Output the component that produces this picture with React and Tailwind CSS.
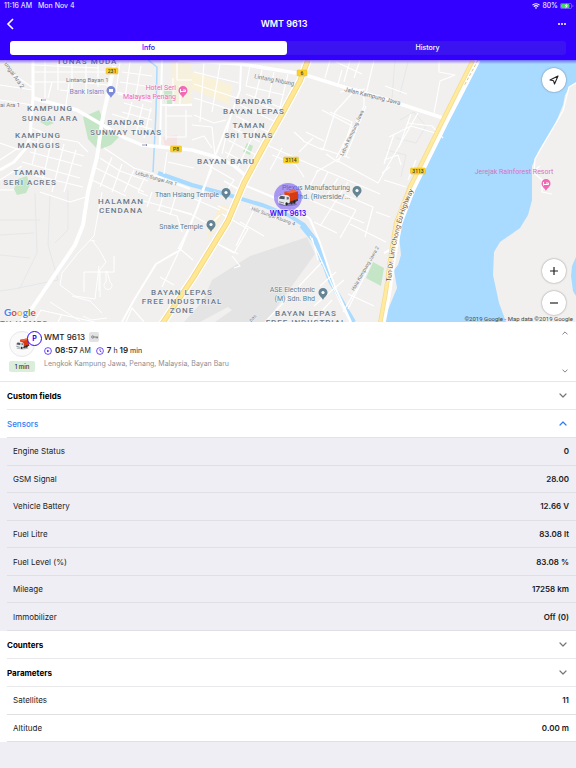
import { useState } from "react";

const SENSORS = [
    { label: "Engine Status", value: "0" },
    { label: "GSM Signal", value: "28.00" },
    { label: "Vehicle Battery", value: "12.66 V" },
    { label: "Fuel Litre", value: "83.08 lt" },
    { label: "Fuel Level (%)", value: "83.08 %" },
    { label: "Mileage", value: "17258 km" },
    { label: "Immobilizer", value: "Off (0)" },
];

const PARAMETERS = [
    { label: "Satellites", value: "11" },
    { label: "Altitude", value: "0.00 m" },
];

// district names, one entry per line of text
const AREAS = [
    ["TUNAS MUDA", 87, 64],
    ["KAMPUNG", 50, 111],
    ["SUNGAI ARA", 50, 121],
    ["BANDAR", 126, 125],
    ["SUNWAY TUNAS", 126, 135],
    ["KAMPUNG", 38, 138],
    ["MANGGIS", 39, 148],
    ["TAMAN", 30, 175],
    ["SERI ACRES", 30, 185],
    ["BANDAR", 254, 104],
    ["BAYAN LEPAS", 254, 114],
    ["TAMAN", 249, 128],
    ["SRI TUNAS", 249, 138],
    ["BAYAN BARU", 226, 164],
    ["HALAMAN", 121, 204],
    ["CENDANA", 121, 213],
    ["BAYAN LEPAS", 182, 295],
    ["FREE INDUSTRIAL", 182, 304],
    ["ZONE", 182, 313],
    ["BAYAN LEPAS", 306, 316],
    ["FREE INDUSTRIAL", 306, 325],
    ["TH HOMES", 24, 326],
];

const SHIELDS = [
    ["231", 112, 71, 12],
    ["P8", 176, 149, 11],
    ["6", 302, 73, 10],
    ["3114", 291, 160, 15],
    ["3113", 418, 171, 15],
];

function Pin({ x, y, color, children }) {
    return (
        <g transform={`translate(${x} ${y})`}>
            <path d="M0 7C-1 4-4.500 3-4.500-.5a4.500 4.500 0 0 1 9 0C4.500 3 1 4 0 7z" fill={color} />
            {children || <circle cy="-.5" r="1.600" fill="#fff" />}
        </g>
    );
}

function Truck(props) {
    return (
        <svg viewBox="0 0 24 20" aria-hidden="true" {...props}>
            <ellipse cx="12" cy="17" rx="10" ry="2" fill="#000" opacity=".25" />
            <path d="M8 3 19 1l4 2v10l-9 3-6-4z" fill="#e2411c" />
            <path d="M8 3 19 1l4 2-9 2z" fill="#f4683c" />
            <path d="M14 5l9-2v10l-9 3z" fill="#d63a12" />
            <path d="M11 15l12-4v2l-11 4z" fill="#3b3b3b" />
            <path d="M1 9 5 6l7 1 2 2v6l-5 3-8-3z" fill="#e6e9eb" />
            <path d="m2 10 2-2.500 4.500.9L8 11.500 2.500 10.800z" fill="#4a5660" />
            <path d="m10.500 8.500 2.500.8v2l-2.500.7z" fill="#6a757e" />
            <path d="m2 13.500 5.500 1.500v1.200L2 14.700z" fill="#7c8489" />
            <ellipse cx="10.500" cy="16.500" rx="1.400" ry="1.800" fill="#222" />
            <ellipse cx="19" cy="14.500" rx="1.400" ry="1.800" fill="#222" />
            <ellipse cx="16" cy="15.500" rx="1.200" ry="1.600" fill="#333" />
        </svg>
    );
}

function Chevron({ up, className }) {
    return (
        <svg viewBox="0 0 8 5" className={className} fill="none" stroke="currentColor" strokeWidth="1.200" strokeLinecap="round" strokeLinejoin="round" aria-hidden="true">
            <path d={up ? "M1 4l3-3 3 3" : "M1 1l3 3 3-3"} />
        </svg>
    );
}

function MapDrawing() {
    return (
        <svg
            viewBox="0 60 576 262"
            preserveAspectRatio="xMidYMid slice"
            className="block h-full w-full font-['Roboto',sans-serif]"
            fill="none"
            role="img"
            aria-label="Map of Bayan Lepas"
        >
            <path d="M0 60h576v262H0z" fill="#f1f0ef" />

            {/* built-up blocks */}
            <path d="M172 60h20v46h-14l-7-13z" fill="#f6f1df" />
            <path d="M192 72l40 13-3 20-37-16z" fill="#f9f1d8" />
            <path d="M209 225l12-20 8 2-22 34z" fill="#f8efd6" />
            <path d="M163 137l14-2v11l-12 2z" fill="#f3e3e3" />
            <path d="M307 237l-57 19-38 24-9 21-19 21h82l49-68z" fill="#e4e4e4" />
            <path d="M200 322l28-15 4 3-17 12z" fill="#f1f0ef" />

            {/* parks */}
            <g fill="#c4e6c6">
                <path d="M83 117l16-7 6 14-7 26-10-11z" />
                <path d="M101 127l18 10-8 8-10 4-3-10z" />
                <path d="M44 118l10 5-7 3-7-4z" />
                <path d="M18 179l9-3 3 9-4 8-9 2-3-6z" />
                <path d="M164 91h9v15l-8-1z" />
                <path d="M247 143l6 3-3 9-7-3z" />
                <path d="M373 262l11 6-3 18-15-8z" />
            </g>

            {/* sea and canals */}
            <path d="M478 60l-31 58-35 74-8 22-5 21 2 20-3 10-4 5 3 18-7 17-7 17h123l-7-19-6-28 1-23 6-10 20-14 8-13 4-15v-34l6-14 18-30 7-17 2-10 5-9 6-4V60z" fill="#a9daff" />
            <path d="M576 257l-4 9-1 10 2 15 3 5z" fill="#a9daff" />
            <path d="M148 60l9 7-1 45-3 60" stroke="#a9daff" strokeWidth="1.500" />
            <path d="M158 173l34 12 33 9 37 11 28 11 14 9 12 17 14 39 24 41" stroke="#a9daff" strokeWidth="4" />
            <path d="M302 225l14 17 8 22" stroke="#a9daff" strokeWidth="6" />

            {/* faint lanes */}
            <g stroke="#e6e7e8" strokeWidth="1">
                <path d="M35 193l2 60-17 35-20 3M50 195l-2 50 10 35-40 8M68 190v40l-13 13M0 220h40M0 235l34-2M0 255l30 3" />
                <path d="M395 60l-3 38M408 62l-8 32M400 120l14-8 12 14-10 17-20-5M386 150l20 5-5 22" />
            </g>

            {/* side streets */}
            <g stroke="#fff" strokeWidth="1.200" strokeLinejoin="round">
                <path d="M0 85l33 5M0 100l33 5M5 60l8 14 20 14M33 72h76M33 82h45l30 3M45 60v38M58 60v30M72 60v28M86 60v32M98 65v22M60 90l42 5M48 98l4-16M66 105l3-22M33 65l66 3" />
                <path d="M120 62l-4 30 34 7M122 72l30 4M120 82l31 5M118 94l34 8M130 62l-5 36M141 66l-6 34M124 103l28 8M122 112l30 8M119 121l33 8M132 102l-7 26M143 104l-7 29M151 108l-7 30M112 114l16 5" />
                <path d="M104 148l30 20 20 6M100 158l20 13 28 10M96 168l48 24M112 157l-12 30M122 164l-10 28M134 170l-10 22M146 175l-8 17M92 180l34 16" />
                <path d="M32 128l24 10 22 4 10 10M28 140l56 16M30 152l52 14M22 162l58 16M0 180l22-14M0 160l18-12M40 130l-8 35M52 138l-10 45M64 144l-12 48M76 150l-12 42M33 175l50 12M0 143l20 7M0 190h14M40 192l30 10 16-5" />
                <path d="M166 100v40M173 78v27M166 116h26M168 106l24-2M177 62v18h15M180 85v20M186 110v27h-20M192 125l20 2 3 30M168 162l26 6M167 152l-3 22M192 140l12-4 8 12" />
                <path d="M194 72l45 11M194 84l43 14M194 98l38 12M204 62l-4 60M220 64l-8 48M194 115l20 8 12-3M250 66l-4 20 38 9M262 70l-8 32 22 8M274 72l-7 34M288 74l-10 42M246 94l36 14M240 105l34 16M236 116l32 16M233 128l27 14M228 140l28 15M225 152l24 12M232 110l-10 44M244 120l-17 38M258 125l-20 42M206 164l28 16-8 12M212 170l-10 20" />
                <path d="M336 62l26 12M342 70l-4 14M350 60l-6 22M330 60l-5 18M354 78l6-18M357 88l-22 24-12 38-20-9M330 112l22 10-12 36-24 14M322 110l34 18M320 148l30 10M313 138l-14 14M306 132l18 9M294 132l10 9M340 92l25-3M364 92v14l-26 56-12-8M366 106l-20 50M338 161l40 22 40-70M352 128l-16 30M374 60l-8 34" />
                <path d="M269 146l45 20 38 16 28 12M272 155l24 10 8 12M282 148l-12 22M318 170l-8 16M328 172l-9 18M338 178l-14 22M348 182l-28 44M345 195l28 12-8 30M310 200l54 23M356 210l-16 28M314 222l23 11M308 190l48 20M350 224l36 18M376 212l14 5" />
                <path d="M439 60v12l16 3-15 6-6 32M385 86l22 8M407 123l25 3 11 12M411 114l-12 33M389 137l22-11 24 7M394 134l-10 30M384 160l14-5M390 167l-8 6M384 180l22 7M398 155l3 10M416 160l-8 20" />
                <path d="M192 215l18 10 10-10M222 214l26 15-14 24-22-12M240 222l24 14M254 210l-18 36M218 244l20 10M232 256l8 10-6 2M250 207l40 18M218 206l16 7M192 198l28 12" />
                <path d="M102 192l-8 44-16 17-16 20-2 12 15 11 20 3 4-33M92 240l8 11 6 11-7 9 0 20M84 292V272h30V256M100 271v26M106 271v11a4 4 0 1 0 4 0l-3-11M72 296l18 5 12 12M50 302l30 19M83 316l8 4 16-2M90 240l5 1" strokeWidth="1" />
                <path d="M138 192l10 4M140 200l52 14M152 192l-5 15M164 192l-5 18M176 195l-6 20M160 205l32 10M182 232l-5-16-20-6M179 248l14 12M180 249l-18 38M192 222l-14 27M160 277l14 8M126 322l6-14 12 14M40 310l55 12M35 320l6-10M58 322l4-8" />
                <path d="M310 236l12 26-57 60M322 262l14 32 14 28M336 272l-16 14M344 280l-30 26M318 260l-6-22M348 294l26 12M357 288l-14 24M332 300l-20 22M370 265l-22 44" />
                <path d="M576 83l-7 4-3 12-3 12-20 34-8 14-1 14 8 7v12l10 2M536 169l4-3" />
            </g>

            {/* collector roads */}
            <g stroke="#fff" strokeLinejoin="round">
                <path d="M33 60v38l-3 38-4 12-12 14-14 8" strokeWidth="3" />
                <path d="M33 98l44 12 24 14 24 14 17 7 50 5 24 7 17 8 13 11" strokeWidth="3.500" />
                <path d="M114 66l-7 32-5 24-5 35-9 35-5 33-8 20-42 62-13 16" strokeWidth="4" />
                <path d="M162 60l-2 85M160 105h32M154 175l36 14" strokeWidth="2" />
                <path d="M241 64l-1 26-10 28-15 38-17 50-18 44-24 14-22 36-12 22" strokeWidth="2" />
                <path d="M178 60l63 4 61 10 42 13 41 12 58 19" strokeWidth="3.500" />
                <path d="M244 185l48 20 18 14 10 24 15 44 16 35" strokeWidth="2" />
                <path d="M384 253l8-4M240 190l-16-9" strokeWidth="2" />
            </g>

            {/* trunk roads */}
            <g strokeLinejoin="round">
                <path d="M308 60l-8 21-19 35-16 28-21 39-16 38-35 57-31 46" stroke="#fff" strokeWidth="8" />
                <path d="M308 60l-8 21-19 35-16 28-21 39-16 38-35 57-31 46" stroke="#f2d47c" strokeWidth="5.500" />
                <path d="M308 60l-8 21-19 35-16 28-21 39-16 38-35 57-31 46" stroke="#ffe793" strokeWidth="4" />
                <path d="M477 60l-31 60-34 69-13 34-7 38-4 30-6 33" stroke="#fff" strokeWidth="7" />
                <path d="M473 60l-29 58-34 69-14 36-6 38-4 30-6 33" stroke="#f5dc8c" strokeWidth="4.500" />
                <path d="M473 60l-29 58-34 69-14 36-6 38-4 30-6 33" stroke="#ffeaa0" strokeWidth="3" />
                <path d="M478 60l-14 26" stroke="#d9c78c" strokeDasharray="3 2" />
            </g>

            {SHIELDS.map(([text, x, y, w]) => (
                <g key={text}>
                    <rect x={x - w / 2} y={y - 3} width={w} height="6" rx="1" fill="#fbd12c" stroke="#e5b91a" strokeWidth=".5" />
                    <text x={x} y={y + 2} textAnchor="middle" fontSize="5" fontWeight="500" fill="#3c3a2c">{text}</text>
                </g>
            ))}

            {/* street names */}
            <g fontSize="6" fill="#777b7f" stroke="#f4f4f4" strokeWidth="1" paintOrder="stroke">
                <text x="66" y="82">Lintang Bayan 1</text>
                <text x="0" y="107">ai Ara 1</text>
                <text transform="translate(4 64) rotate(55)">ungai Ara 2</text>
                <text transform="translate(254 78) rotate(11)">Lintang Nibung</text>
                <text transform="translate(344 91) rotate(14)" fontSize="6">Jalan Kampung Jawa</text>
                <text transform="translate(343 156) rotate(-65)" fontSize="5">Lebuh Kampung Jawa</text>
                <text transform="translate(135 174) rotate(16)" fontSize="5">Lebuh Sungai Ara 1</text>
                <text transform="translate(251 210) rotate(20)" fontSize="5">Hilir Sungai Kluang 4</text>
                <text transform="translate(354 291) rotate(-60)" fontSize="5">Hala Kampung Jawa 2</text>
                <text transform="translate(251 322) rotate(-45)" fontSize="5">pas</text>
            </g>
            <defs>
                <path id="highway" d="M391 282C393 262 395 248 399 232C403 213 408 203 418 180" />
            </defs>
            <text fontSize="7" fill="#7a5426" stroke="#fff" strokeWidth="1" paintOrder="stroke">
                <textPath href="#highway">Tun Dr. Lim Chong Eu Highway</textPath>
            </text>

            <g fontSize="8" fontWeight="500" fill="#6a798a" stroke="#f4f4f4" strokeWidth="1" paintOrder="stroke" textAnchor="middle" className="tracking-[1px]">
                {AREAS.map(([text, x, y]) => (
                    <text key={`${text}-${x}-${y}`} x={x} y={y}>{text}</text>
                ))}
            </g>

            {/* places */}
            <g fontSize="7" stroke="#f6f6f6" strokeWidth="1" paintOrder="stroke" textAnchor="end">
                <text x="104" y="94" fill="#7486c6">Bank Islam</text>
                <text x="176" y="90" fill="#ef67b1">Hotel Seri</text>
                <text x="176" y="99" fill="#ef67b1">Malaysia Penang</text>
                <g fill="#5f7c8c">
                    <text x="219" y="197">Than Hsiang Temple</text>
                    <text x="203" y="229">Snake Temple</text>
                    <text x="350" y="190">Plexus Manufacturing</text>
                    <text x="350" y="199">Sdn. Bhd. (Riverside/...</text>
                    <text x="315" y="292">ASE Electronic</text>
                    <text x="315" y="301">(M) Sdn. Bhd</text>
                </g>
            </g>
            <text x="514" y="174" fontSize="7" textAnchor="middle" fill="#d873bd">Jerejak Rainforest Resort</text>

            <Pin x={111} y={91} color="#7b8bd8"><path d="M-2-2h4v3h-4z" fill="#fff" /></Pin>
            <Pin x={183} y={91} color="#f169b5"><path d="M-2.500-2v3.500M-2.500.5h5V-1H0" stroke="#fff" /></Pin>
            <Pin x={546} y={184} color="#f169b5"><path d="M-2.500-2v3.500M-2.500.5h5V-1H0" stroke="#fff" /></Pin>
            <Pin x={226} y={193} color="#658494" />
            <Pin x={211} y={225} color="#658494" />
            <Pin x={357} y={191} color="#658494" />
            <Pin x={323} y={293} color="#658494" />
            <path d="M46 100h-5m1-1-1 1 1 1M142 145h5m-1-1 1 1-1 1" stroke="#7c84a8" strokeWidth=".8" />

            {/* vehicle marker */}
            <circle cx="288" cy="197" r="14" fill="#6b4cf0" opacity=".55" />
            <Truck x="277" y="189" width="22" height="18" />
            <text x="288" y="216" textAnchor="middle" fontSize="7" fontWeight="600" fill="#3300ff" stroke="#f4f4f4" strokeWidth="1" paintOrder="stroke" className="font-['Inter',sans-serif]">WMT 9613</text>
        </svg>
    );
}

function VehicleMap() {
    return (
        <section className="relative h-[262px] overflow-hidden">
            <MapDrawing />
            <div className="pointer-events-none absolute inset-x-0 top-0 h-1 bg-gradient-to-b from-[#3300ff]/50 to-transparent" />
            <button aria-label="Follow vehicle" className="absolute top-2 right-[10px] flex size-6 items-center justify-center rounded-full bg-white shadow-[0_0_2px_rgba(0,0,0,0.45)]">
                <svg viewBox="0 0 10 10" className="size-[10px]" fill="none" stroke="#222" strokeWidth="1.100" strokeLinejoin="round">
                    <path d="M9 1 1 5l3.500.7L5.500 9z" />
                </svg>
            </button>
            <div className="absolute right-[10px] bottom-[7px] flex flex-col gap-2">
                <button aria-label="Zoom in" className="flex size-6 items-center justify-center rounded-full bg-white shadow-[0_0_2px_rgba(0,0,0,0.45)]">
                    <svg viewBox="0 0 10 10" className="size-[10px]" stroke="#222" strokeWidth="1.200"><path d="M1 5h8M5 1v8" /></svg>
                </button>
                <button aria-label="Zoom out" className="flex size-6 items-center justify-center rounded-full bg-white shadow-[0_0_2px_rgba(0,0,0,0.45)]">
                    <svg viewBox="0 0 10 10" className="size-[10px]" stroke="#222" strokeWidth="1.200"><path d="M1 5h8" /></svg>
                </button>
            </div>
            <div className="absolute bottom-1 left-1 font-['Lato',sans-serif] text-[10px] leading-[12px] font-bold [text-shadow:0_0_2px_white]">
                <span className="text-[#4285f4]">G</span>
                <span className="text-[#ea4335]">o</span>
                <span className="text-[#fbbc05]">o</span>
                <span className="text-[#4285f4]">g</span>
                <span className="text-[#34a853]">l</span>
                <span className="text-[#ea4335]">e</span>
            </div>
            <p className="absolute right-[3px] bottom-0 font-['Roboto',sans-serif] text-[6px] leading-[6px] text-[#444]">
                ©2019 Google - Map data ©2019 Google
            </p>
        </section>
    );
}

function Header({ tab, onTab }) {
    return (
        <header className="bg-[#3300ff] text-white">
            <div className="flex h-3 items-center justify-between pr-[2px] pl-1 text-[7px] leading-[12px]">
                <div className="flex gap-[6px]">
                    <span>11:16 AM</span>
                    <span>Mon Nov 4</span>
                </div>
                <div className="flex items-center gap-[2px]">
                    <svg viewBox="0 0 8 6" className="h-[6px] w-2" fill="none" stroke="currentColor" strokeWidth="1.100">
                        <path d="M.5 2.200a5 5 0 0 1 7 0M1.800 3.700a3.200 3.200 0 0 1 4.400 0" />
                        <path d="M4 6 2.900 4.800a1.600 1.600 0 0 1 2.200 0z" fill="currentColor" stroke="none" />
                    </svg>
                    <span>80%</span>
                    <svg viewBox="0 0 14 6" className="h-[6px] w-[14px]">
                        <rect x=".4" y=".4" width="11.200" height="5.200" rx="1.500" fill="none" stroke="#8f78ff" strokeWidth=".7" />
                        <rect x="1" y="1" width="8.500" height="4" rx="1" fill="#45d860" />
                        <path d="M7 .3 4.500 3.300h1.600l-.8 2.400L8 2.600H6.300z" fill="#fff" />
                        <path d="M12.500 2v2q1-.3 1-1t-1-1z" fill="#8f78ff" />
                    </svg>
                </div>
            </div>
            <div className="flex h-6 items-center px-[6px]">
                <button aria-label="Back" className="flex size-4 items-center">
                    <svg viewBox="0 0 8 12" className="h-3 w-2" fill="none" stroke="currentColor" strokeWidth="1.600">
                        <path d="M7 1 2 6l5 5" />
                    </svg>
                </button>
                <h1 className="flex-1 text-center text-[9px] leading-[12px] font-semibold">WMT 9613</h1>
                <button aria-label="More" className="flex h-4 w-6 items-center justify-end pr-1">
                    <svg viewBox="0 0 8 2" className="h-[2px] w-2 shrink-0" fill="currentColor">
                        <circle cx="1" cy="1" r="1" /><circle cx="4" cy="1" r="1" /><circle cx="7" cy="1" r="1" />
                    </svg>
                </button>
            </div>
            <div className="px-[10px] pt-[5px] pb-[5px]">
                <div className="flex h-[14px] gap-[2px] rounded-[3px] bg-[#3b12f0]">
                    {["Info", "History"].map((name) => (
                        <button
                            key={name}
                            onClick={() => onTab(name)}
                            className={
                                tab === name
                                    ? "flex-1 rounded-[3px] bg-white text-[7px] leading-[14px] font-medium text-[#3300ff]"
                                    : "flex-1 rounded-[3px] text-[7px] leading-[14px] font-medium text-white"
                            }
                        >
                            {name}
                        </button>
                    ))}
                </div>
            </div>
        </header>
    );
}

function VehicleCard() {
    return (
        <section className="flex h-[60px] border-b border-[#e6e6e8] bg-white pr-2 pl-[9px]">
            <div className="flex w-[35px] shrink-0 flex-col pt-[9px]">
                <div className="relative size-[26px] rounded-full border border-[#e8e8e8] bg-[#fafafa]">
                    <Truck className="mx-auto mt-[6px] h-3 w-[15px]" />
                    <span className="absolute -top-[1px] left-[17px] flex size-[15px] items-center justify-center rounded-full border border-[#3300ff] bg-white text-[7px] leading-[7px] font-bold text-[#3300ff]">
                        P
                    </span>
                </div>
                <span className="mt-1 h-[11px] w-[26px] rounded-[2px] bg-[#d9eedb] text-center text-[6px] leading-[11px] font-medium text-[#333]">1 min</span>
            </div>
            <div className="flex-1 pt-[9px]">
                <div className="flex items-center gap-1">
                    <h2 className="text-[8px] leading-[12px] font-medium text-[#222]">WMT 9613</h2>
                    <span className="flex h-[10px] w-[10px] items-center justify-center rounded-[2px] bg-[#e2e2e2]">
                        <svg viewBox="0 0 8 4" className="h-1 w-[7px]" fill="none" stroke="#777" strokeWidth="1">
                            <circle cx="2" cy="2" r="1.300" />
                            <path d="M3.300 2H8M6 2v1.500M7.500 2v1.500" />
                        </svg>
                    </span>
                </div>
                <div className="mt-px flex items-center text-[#222]">
                    <svg viewBox="0 0 8 8" className="mr-[3px] size-2" fill="none" stroke="#3300ff" strokeWidth=".7">
                        <circle cx="4" cy="4" r="3.400" />
                        <path d="M3.200 2.700v2.600L5.400 4z" fill="#3300ff" stroke="none" />
                    </svg>
                    <p className="text-[8px] leading-[12px] font-semibold">
                        08:57 <span className="text-[7px] font-normal">AM</span>
                    </p>
                    <svg viewBox="0 0 8 8" className="mr-[3px] ml-[5px] size-2" fill="none" stroke="#3300ff" strokeWidth=".7">
                        <circle cx="4" cy="4" r="3.400" />
                        <path d="M4 2v2.200l1.500.8" />
                    </svg>
                    <p className="text-[8px] leading-[12px] font-semibold">
                        7 <span className="text-[7px] font-normal">h</span> 19 <span className="text-[7px] font-normal">min</span>
                    </p>
                </div>
                <p className="mt-[2px] text-[7px] leading-[10px] text-[#8e8e93]">Lengkok Kampung Jawa, Penang, Malaysia, Bayan Baru</p>
            </div>
            <div className="flex flex-col justify-between pt-[9px] pb-2 text-[#777]">
                <Chevron up className="h-1 w-[6px]" />
                <Chevron className="h-1 w-[6px]" />
            </div>
        </section>
    );
}

function SectionRow({ title, open, onToggle }) {
    return (
        <h3 className="bg-white pl-[7px]">
            <button
                onClick={onToggle}
                aria-expanded={!!open}
                className={
                    open
                        ? "flex h-7 w-full items-center justify-between border-b border-[#e4e4e8] pr-[9px] text-[8px] leading-[12px] font-medium text-[#2f7cf6]"
                        : "flex h-7 w-full items-center justify-between border-b border-[#e9e9ec] pr-[9px] text-[8px] leading-[12px] font-bold text-black"
                }
            >
                {title}
                <Chevron up={open} className={open ? "h-[5px] w-2" : "h-[5px] w-2 text-[#777]"} />
            </button>
        </h3>
    );
}

function ValueRow({ label, value }) {
    return (
        <div className="flex items-center justify-between border-b border-[#e0e0e4] pr-[7px] pl-[6px] text-[8px] leading-[12px] text-[#1c1c1e]">
            <dt>{label}</dt>
            <dd className="font-semibold">{value}</dd>
        </div>
    );
}

export default function App() {
    const [tab, setTab] = useState("Info");
    const [sensorsOpen, setSensorsOpen] = useState(true);

    return (
        <div className="min-h-screen bg-[#efeef4] font-['Inter',sans-serif]">
            <Header tab={tab} onTab={setTab} />
            <VehicleMap />
            <main>
                <VehicleCard />
                <SectionRow title="Custom fields" />
                <SectionRow title="Sensors" open={sensorsOpen} onToggle={() => setSensorsOpen(!sensorsOpen)} />
                {sensorsOpen && (
                    <dl className="grid h-[193px] auto-rows-fr bg-[#efeef4] pl-[7px]">
                        {SENSORS.map((item) => (
                            <ValueRow key={item.label} {...item} />
                        ))}
                    </dl>
                )}
                <SectionRow title="Counters" />
                <SectionRow title="Parameters" />
                <dl className="grid h-[55px] auto-rows-fr bg-white pl-[7px]">
                    {PARAMETERS.map((item) => (
                        <ValueRow key={item.label} {...item} />
                    ))}
                </dl>
            </main>
        </div>
    );
}
